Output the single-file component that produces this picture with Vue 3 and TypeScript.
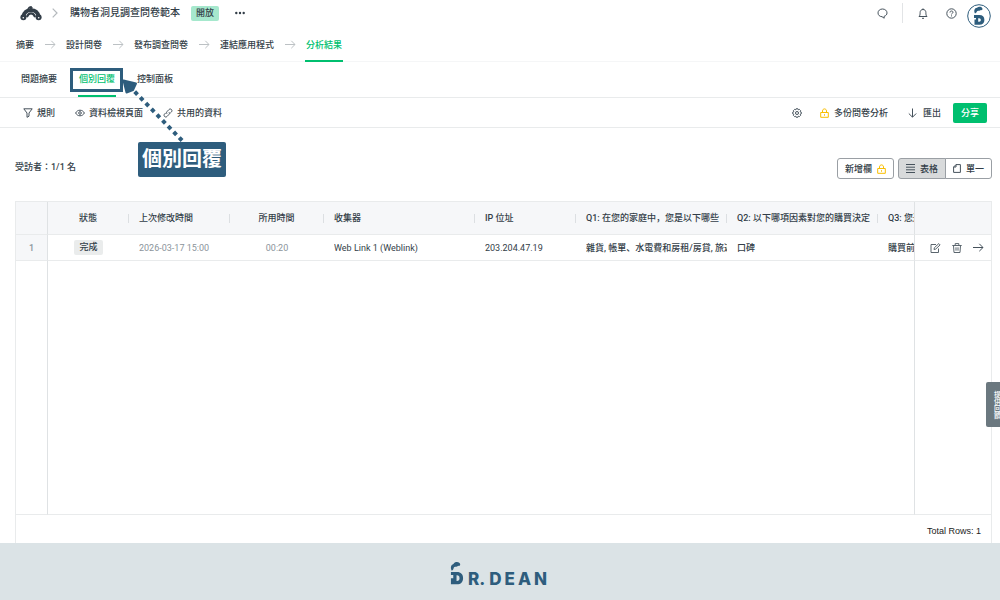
<script setup lang="ts">
import { ref } from 'vue'

interface Column {
  key: string
  label: string
  width: string
  centered?: boolean
}

const steps: string[] = ['摘要', '設計問卷', '發布調查問卷', '連結應用程式', '分析結果']
const activeStep = ref<number>(4)

const tabs: string[] = ['問題摘要', '個別回覆', '控制面板']
const activeTab = ref<number>(1)

const view = ref<'table' | 'single'>('table')

const columns: Column[] = [
  { key: 'status', label: '狀態', width: '81px', centered: true },
  { key: 'modified', label: '上次修改時間', width: '101px' },
  { key: 'duration', label: '所用時間', width: '94px', centered: true },
  { key: 'collector', label: '收集器', width: '151px' },
  { key: 'ip', label: 'IP 位址', width: '101px' },
  { key: 'q1', label: 'Q1: 在您的家庭中，您是以下哪些', width: '151px' },
  { key: 'q2', label: 'Q2: 以下哪項因素對您的購買決定', width: '151px' },
  { key: 'q3', label: 'Q3: 您通常如何', width: 'auto' },
]

const rows: Record<string, string>[] = [
  {
    status: '完成',
    modified: '2026-03-17 15:00',
    duration: '00:20',
    collector: 'Web Link 1 (Weblink)',
    ip: '203.204.47.19',
    q1: '雜貨, 帳單、水電費和房租/房貸, 旅遊',
    q2: '口碑',
    q3: '購買前的研究',
  },
]
</script>

<template>
  <div class="page">
    <header class="top">
      <a href="#" class="logo" aria-label="首頁">
        <svg width="22" height="15" viewBox="0 0 22 15">
          <path d="M3.4 10.500C4.300 5.800 7.200 4.200 11 4.200s6.700 1.600 7.600 6.300" fill="none" stroke="#333e48" stroke-width="3.800" />
          <path d="M8 4.200c.2-2 1.600-3.300 3.800-3.400M10 3.800c.2-1.300 1.200-2 2.600-2.100" fill="none" stroke="#333e48" stroke-width="1.600" />
          <circle cx="3.400" cy="11.300" r="3" fill="#333e48" />
          <circle cx="18.600" cy="11.300" r="3" fill="#333e48" />
          <path d="M6.800 11c1-2.500 2.400-3.700 4.200-3.700s3.200 1.200 4.200 3.700" fill="none" stroke="#333e48" stroke-width="2.200" />
          <circle cx="3.300" cy="11.700" r=".8" fill="#fff" />
          <circle cx="18.700" cy="11.700" r=".8" fill="#fff" />
        </svg>
      </a>
      <svg class="chevron" width="6" height="10" viewBox="0 0 6 10"><path d="M.7.7 5 5 .7 9.300" fill="none" stroke="#b4b9bd" stroke-width="1.200" /></svg>
      <h1>購物者洞見調查問卷範本</h1>
      <span class="open">開放</span>
      <button class="bare more" aria-label="更多">
        <svg width="10" height="4" viewBox="0 0 10 4" fill="#333e48"><circle cx="1.300" cy="2" r="1.200" /><circle cx="5" cy="2" r="1.200" /><circle cx="8.700" cy="2" r="1.200" /></svg>
      </button>
      <div class="top-right">
        <div class="top-icons">
          <button class="bare chat" aria-label="聊天">
            <svg width="11" height="11" viewBox="0 0 11 11"><path d="M5.500 1C2.900 1 1 2.700 1 4.900s1.700 3.700 4 3.800l2.200 1.500-.1-1.900C8.900 7.800 10 6.600 10 4.900 10 2.700 8.100 1 5.500 1z" fill="none" stroke="#46525c" /></svg>
          </button>
          <span class="rule"></span>
          <button class="bare bell" aria-label="通知">
            <svg width="10" height="11" viewBox="0 0 10 11"><path d="M1 8.500h8C8 7.600 7.900 6.500 7.900 4.600 7.900 2.700 6.800 1.500 5 1.500S2.100 2.700 2.100 4.600C2.100 6.500 2 7.600 1 8.500zM4 10.300h2M5 .4v1" fill="none" stroke="#46525c" /></svg>
          </button>
          <button class="bare help" aria-label="說明">
            <svg width="11" height="11" viewBox="0 0 11 11" fill="none" stroke="#46525c"><circle cx="5.500" cy="5.500" r="4.700" /><path d="M4 4.500C4 3.500 4.600 3 5.500 3S7 3.500 7 4.300c0 1-1.500 1-1.500 2.100M5.500 7.400v1" /></svg>
          </button>
        </div>
        <button class="bare account" aria-label="帳戶">
          <svg width="24" height="24" viewBox="0 0 24 24">
            <circle cx="12" cy="12" r="11.300" fill="#fff" stroke="#2e5d7d" />
            <path d="M8 9.500C6.600 6.500 7.500 4 10 3.700c1.400-1.300 4.200-1.200 5.300.5.700 1.200-.2 2.200-1.400 1.900-1 1-2.500.8-3.500.9-1 .8-.4 1.600-2.400 2.500z" fill="#2e5d7d" />
            <path fill-rule="evenodd" d="M7 11h5.400c3.200 0 5 1.900 5 4.900s-1.800 4.900-5 4.900H7.500v-5.300H9V14H7zm4.200 3.300v3.400h1c1 0 1.600-.7 1.600-1.700s-.6-1.700-1.600-1.700z" fill="#2e5d7d" />
          </svg>
        </button>
      </div>
    </header>

    <nav class="steps" aria-label="步驟">
      <template v-for="(step, i) in steps" :key="step">
        <svg v-if="i > 0" width="11" height="9" viewBox="0 0 11 9"><path d="M0 4.500h10M6.300.8 10 4.500 6.300 8.200" fill="none" stroke="#bcc1c4" /></svg>
        <a href="#" :class="{ active: i === activeStep }" @click.prevent="activeStep = i">{{ step }}</a>
      </template>
    </nav>

    <nav class="tabs" aria-label="分析結果">
      <a v-for="(tab, i) in tabs" :key="tab" href="#" :class="{ active: i === activeTab }" @click.prevent="activeTab = i">{{ tab }}</a>
    </nav>

    <div class="toolbar">
      <button class="bare tool">
        <svg width="10" height="10" viewBox="0 0 10 10"><path d="M.8.8h8.400L6 5v3.200L4 9.300V5z" fill="none" stroke="#46525c" /></svg>
        規則
      </button>
      <button class="bare tool">
        <svg width="10" height="8" viewBox="0 0 10 8" fill="none" stroke="#46525c"><path d="M.6 4C1.600 2.200 3.100 1.200 5 1.200S8.400 2.200 9.400 4C8.400 5.800 6.900 6.800 5 6.800S1.600 5.800.6 4z" /><circle cx="5" cy="4" r="1.300" /></svg>
        資料檢視頁面
      </button>
      <button class="bare tool">
        <svg width="10" height="10" viewBox="0 0 10 10" fill="none" stroke="#46525c"><path d="M4.100 5.900c-.8-.9-.7-1.700 0-2.400L6 1.500c1.700-1.500 3.900.6 2.500 2.400L7.200 5.200M5.900 4.100c.8.9.7 1.700 0 2.400L4 8.500C2.300 10 .1 7.900 1.500 6.100l1.300-1.300" /></svg>
        共用的資料
      </button>
      <span class="space"></span>
      <button class="bare gear" aria-label="設定">
        <svg width="10" height="10" viewBox="0 0 10 10" fill="none" stroke="#46525c"><path d="M4.200.7h1.600l.4 1.100 1.200-.4 1.200 1.200-.4 1.200 1.100.4v1.600l-1.100.4.4 1.200-1.200 1.200-1.200-.4-.4 1.100H4.200l-.4-1.100-1.200.4-1.200-1.200.4-1.200L.7 5.800V4.200l1.100-.4-.4-1.200 1.200-1.200 1.200.4z" /><circle cx="5" cy="5" r="1.500" /></svg>
      </button>
      <button class="bare tool multi">
        <svg width="9" height="10" viewBox="0 0 9 10" fill="none" stroke="#f9be00"><path d="M.7 4.500h7.600v4.800H.7zM2.500 4.500V3c0-2.800 4-2.800 4 0v1.500M4.500 6.200v1.500" /></svg>
        多份問卷分析
      </button>
      <button class="bare tool export">
        <svg width="9" height="10" viewBox="0 0 9 10"><path d="M4.500.5v8.500M.8 5.500l3.700 3.700 3.700-3.700" fill="none" stroke="#46525c" /></svg>
        匯出
      </button>
      <button class="share">分享</button>
    </div>

    <main>
      <div class="controls">
        <span class="count">受訪者：1/1 名</span>
        <button class="outline add">
          新增欄
          <svg width="9" height="10" viewBox="0 0 9 10" fill="none" stroke="#f9be00"><path d="M.7 4.500h7.600v4.800H.7zM2.500 4.500V3c0-2.800 4-2.800 4 0v1.500M4.500 6.200v1.500" /></svg>
        </button>
        <div class="switch">
          <button class="outline" :class="{ on: view === 'table' }" @click="view = 'table'">
            <svg width="9" height="9" viewBox="0 0 9 9"><path d="M0 .5h9M0 3.200h9M0 5.800h9M0 8.500h9" stroke="#46525c" /></svg>
            表格
          </button>
          <button class="outline" :class="{ on: view === 'single' }" @click="view = 'single'">
            <svg width="8" height="9" viewBox="0 0 8 9"><path d="M3 .6h4.400v7.800H.6V3zM3 .6V3H.6" fill="none" stroke="#46525c" /></svg>
            單一
          </button>
        </div>
      </div>

      <table>
        <colgroup>
          <col style="width: 32px" />
          <col v-for="c in columns" :key="c.key" :style="{ width: c.width }" />
          <col style="width: 77px" />
        </colgroup>
        <thead>
          <tr>
            <th class="num"></th>
            <th v-for="c in columns" :key="c.key" :class="{ centered: c.centered }"><div class="clip">{{ c.label }}</div></th>
            <th class="actions"></th>
          </tr>
        </thead>
        <tbody>
          <tr v-for="(row, i) in rows" :key="i">
            <td class="num">{{ i + 1 }}</td>
            <td v-for="c in columns" :key="c.key" :class="[c.key, { centered: c.centered }]">
              <span v-if="c.key === 'status'" class="done">{{ row[c.key] }}</span>
              <div v-else class="clip">{{ row[c.key] }}</div>
            </td>
            <td class="actions">
              <div class="acts">
                <button class="bare" aria-label="編輯">
                  <svg width="11" height="10" viewBox="0 0 11 10" fill="none" stroke="#5b666e"><path d="M6 1.500H1v8h7.500V5.500M4 6.500l.4-1.800L8.800.6l1.300 1.300L5.700 6.100z" /></svg>
                </button>
                <button class="bare" aria-label="刪除">
                  <svg width="10" height="10" viewBox="0 0 10 10" fill="none" stroke="#5b666e"><path d="M.3 2.500h9.400M3.200 2.300V.6h3.600v1.700M1.500 2.500l.5 7h6l.5-7M4 4.300v3.400M6 4.300v3.400" /></svg>
                </button>
                <button class="bare" aria-label="檢視">
                  <svg width="11" height="9" viewBox="0 0 11 9"><path d="M0 4.500h10M6.300.8 10 4.500 6.300 8.200" fill="none" stroke="#46525c" /></svg>
                </button>
              </div>
            </td>
          </tr>
          <tr class="filler">
            <td></td>
            <td :colspan="columns.length"></td>
            <td class="actions"></td>
          </tr>
        </tbody>
        <tfoot>
          <tr><td :colspan="columns.length + 2">Total Rows: 1</td></tr>
        </tfoot>
      </table>
    </main>

    <footer>
      <svg width="14" height="27" viewBox="0 0 15 27" fill="#2e5d7d">
        <path d="M2 10.500C.2 7.500.8 4.300 3.700 3.300 5 .8 8.500.6 10.200 2.300c1.600 1.800.4 3.500-1.500 3-1.300 1.600-3 .8-4.400 1.500-.8 1 .1 2.400-2.300 3.700z" />
        <path fill-rule="evenodd" d="M1 12h6.500c4.200 0 6.500 2.500 6.500 6.500S11.700 25 7.500 25H1v-6.500h2.500V15H1zm6 3.500v6h.6c1.600 0 2.600-1.100 2.600-3s-1-3-2.600-3z" />
      </svg>
      <span class="word">R.</span>
      <span class="word dean">DEAN</span>
    </footer>

    <button class="feedback">提供回饋</button>

    <div class="frame"></div>
    <svg class="pointer" width="64" height="66" viewBox="0 0 64 66">
      <path d="M12.700 12.700 61 62.500" stroke="#2e5d7d" stroke-width="4" stroke-dasharray="4 4" />
      <path d="M1.500 1.500 14 4.500 11 11 4.500 13.500z" fill="#2e5d7d" stroke="#2e5d7d" stroke-width="2" stroke-linejoin="round" />
    </svg>
    <div class="callout">個別回覆</div>
  </div>
</template>

<style>
body {
  margin: 0;
}
</style>

<style scoped>
.page {
  position: relative;
  display: flex;
  flex-direction: column;
  min-height: 100vh;
  overflow: hidden;
  background: #fff;
  color: #333e48;
  font: 500 9px/12px Roboto, "Noto Sans CJK JP", "Noto Sans CJK TC", sans-serif;
}
* {
  box-sizing: border-box;
}
svg {
  flex: none;
  display: block;
}
a {
  color: inherit;
  text-decoration: none;
}
button {
  font: inherit;
  color: inherit;
  cursor: pointer;
}
.bare {
  padding: 0;
  border: 0;
  background: none;
}
.top {
  display: flex;
  align-items: center;
  height: 28px;
  padding: 0 9px 2px 20px;
}
.chevron {
  margin: 0 12px 0 10px;
}
h1 {
  margin: 0;
  font-size: 10px;
  font-weight: 500;
  line-height: 14px;
}
.open {
  margin: 0 16px 0 11px;
  padding: 1px 5px 2px;
  border-radius: 2px;
  background: #a6e8cd;
}
.top-right {
  display: flex;
  align-items: center;
  margin-left: auto;
}
.top-icons {
  display: flex;
  align-items: center;
}
.account {
  padding-top: 6px;
}
.chat {
  margin-right: 14px;
}
.rule {
  width: 1px;
  height: 20px;
  background: #e2e4e6;
}
.bell {
  margin: 0 18px 0 15px;
}
.help {
  margin-right: 10px;
}
.steps {
  display: flex;
  align-items: center;
  gap: 11px;
  height: 34px;
  padding-left: 16px;
  border-bottom: 1px solid #f5f6f7;
}
.steps a {
  display: flex;
  align-items: center;
  height: 34px;
}
.steps svg {
  margin-right: -1px;
}
.steps .active {
  margin-left: -1px;
  padding: 2px 1px 0;
  border-bottom: 2px solid #00bf6f;
  color: #00bf6f;
}
.tabs {
  display: flex;
  gap: 20px;
  height: 36px;
  padding-left: 20px;
  border-bottom: 1px solid #e9ebec;
}
.tabs a {
  height: 35px;
  padding: 11px 1px 0;
}
.tabs .active {
  border-bottom: 2px solid #00bf6f;
  color: #00bf6f;
}
.toolbar {
  display: flex;
  align-items: center;
  height: 30px;
  padding: 0 13px 0 23px;
  border-bottom: 1px solid #e9ebec;
}
.tool {
  display: flex;
  align-items: center;
  gap: 4px;
  margin-right: 20px;
}
.space {
  flex: 1;
}
.gear {
  margin-right: 18px;
}
.multi {
  gap: 5px;
}
.export {
  gap: 6px;
  margin-right: 12px;
}
.share {
  height: 20px;
  padding: 0 8px;
  border: 0;
  border-radius: 2px;
  background: #00bf6f;
  color: #fff;
}
main {
  flex: 1;
  padding: 30px 8px 0 15px;
}
.controls {
  display: flex;
  align-items: center;
  height: 21px;
  margin-bottom: 22px;
}
.count {
  margin-right: auto;
  padding-bottom: 4px;
}
.outline {
  display: flex;
  align-items: center;
  gap: 5px;
  height: 21px;
  padding: 0 7px;
  border: 1px solid #9a9fa4;
  border-radius: 3px;
  background: #fff;
}
.add {
  margin-right: 4px;
}
.switch {
  display: flex;
}
.switch .outline:first-child {
  border-radius: 3px 0 0 3px;
}
.switch .outline:last-child {
  margin-left: -1px;
  border-radius: 0 3px 3px 0;
}
.switch .on {
  background: #d8dadb;
}
table {
  width: 100%;
  table-layout: fixed;
  border-spacing: 0;
  border: 1px solid #e9ebec;
  border-bottom: 0;
}
th,
td {
  padding: 0 0 0 10px;
  text-align: left;
  font-weight: 500;
}
th {
  height: 33px;
  background: #f6f7f9;
  border-bottom: 1px solid #e9ebec;
}
tbody td {
  height: 26px;
  border-bottom: 1px solid #e9ebec;
}
.clip {
  overflow: hidden;
  white-space: nowrap;
}
th .clip {
  border-right: 1px solid #dcdfe2;
  line-height: 9px;
  overflow: clip;
  overflow-clip-margin: 2px;
}
th:nth-last-child(2) .clip {
  border-right: 0;
  overflow: hidden;
  line-height: 12px;
}
.centered {
  padding-left: 0;
  text-align: center;
}
tbody .num {
  padding: 0;
  text-align: center;
  color: #8b949b;
  background: #f6f7f9;
}
tr > :first-child:not([colspan]) {
  border-right: 1px solid #dfe2e4;
}
.actions {
  padding: 0;
  border-left: 1px solid #dfe2e4;
}
.acts {
  display: flex;
  align-items: center;
  gap: 11px;
  padding-left: 15px;
}
.done {
  display: inline-block;
  padding: 1px 5px 2px;
  border-radius: 2px;
  background: #eaecec;
}
.modified,
.duration {
  color: #8b949b;
  font-weight: 400;
}
.collector,
.ip {
  font-weight: 400;
}
.filler td {
  height: 254px;
}
tfoot td {
  height: 28px;
  padding: 3px 10px 0 0;
  text-align: right;
  color: #222;
  font: 400 9px/12px "Liberation Sans", Arial, sans-serif;
}
footer {
  display: flex;
  justify-content: center;
  align-items: flex-start;
  gap: 4px;
  height: 57px;
  padding-top: 17px;
  background: #dbe3e6;
}
.word {
  margin-top: 8px;
  color: #2e5d7d;
  font: 800 17px/22px Inter, sans-serif;
}
.dean {
  letter-spacing: 3px;
}
.feedback {
  position: absolute;
  right: -7px;
  top: 382px;
  height: 45px;
  width: 21px;
  padding: 0;
  border: 0;
  border-radius: 2px 0 0 2px;
  background: #6b787f;
  color: #fff;
  font-size: 7px;
  writing-mode: vertical-rl;
}
.frame {
  position: absolute;
  left: 70px;
  top: 68px;
  width: 53px;
  height: 24px;
  border: 3px solid #2e5d7d;
  pointer-events: none;
}
.pointer {
  position: absolute;
  left: 122px;
  top: 79px;
  pointer-events: none;
}
.callout {
  position: absolute;
  left: 138px;
  top: 142px;
  padding: 4px 4px 5px;
  border-radius: 2px;
  background: #2e5d7d;
  color: #fff;
  font-size: 20px;
  font-weight: 700;
  line-height: 26px;
}
</style>
